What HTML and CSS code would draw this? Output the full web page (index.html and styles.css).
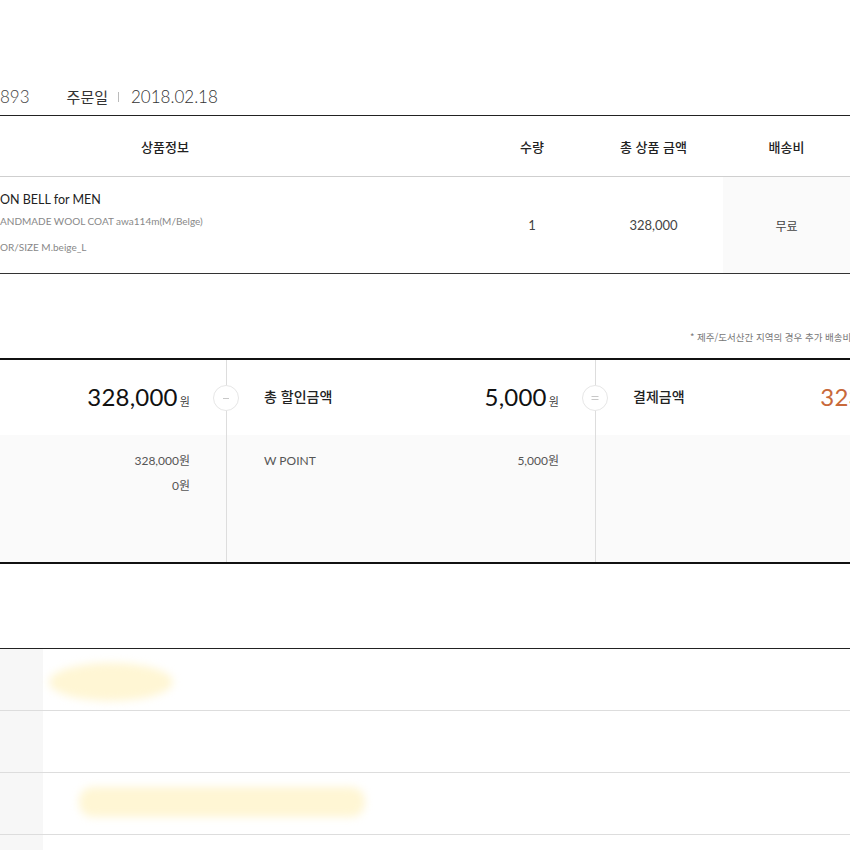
FILE: index.html
```html
<!DOCTYPE html>
<html lang="ko">
<head>
<meta charset="utf-8">
<link rel="stylesheet" href="styles.css">
</head>
<body>
<div class="page">
  <div class="order-head">
    <span class="order-no">893</span>
    <span class="order-label">주문일</span>
    <span class="sep"></span>
    <span class="order-date">2018.02.18</span>
  </div>

  <div class="items">
    <div class="row head-row">
      <div class="cell info-h">상품정보</div>
      <div class="cell">수량</div>
      <div class="cell">총 상품 금액</div>
      <div class="cell">배송비</div>
    </div>
    <div class="row item-row">
      <div class="cell info">
        <div class="brand">ON BELL for MEN</div>
        <div class="pname">ANDMADE WOOL COAT awa114m(M/Belge)</div>
        <div class="opt">OR/SIZE M.beige_L</div>
      </div>
      <div class="cell num">1</div>
      <div class="cell num">328,000</div>
      <div class="cell ship">무료</div>
    </div>
  </div>

  <p class="note">* 제주/도서산간 지역의 경우 추가 배송비가 발생할 수 있습니다.</p>

  <div class="summary">
    <div class="col">
      <div class="top"><span class="label"></span><span class="amount">328,000<small>원</small></span></div>
      <div class="detail">
        <div class="line"><span></span><span>328,000원</span></div>
        <div class="line"><span></span><span>0원</span></div>
      </div>
    </div>
    <div class="col">
      <span class="op">
        <svg width="26" height="26" viewBox="0 0 26 26"><circle cx="13" cy="13" r="12.5" fill="#fff" stroke="#e6e6e6"/><path d="M10 13.5h6" stroke="#c8c8c8" stroke-width="1"/></svg>
      </span>
      <div class="top"><span class="label">총 할인금액</span><span class="amount">5,000<small>원</small></span></div>
      <div class="detail">
        <div class="line"><span>W POINT</span><span>5,000원</span></div>
      </div>
    </div>
    <div class="col">
      <span class="op">
        <svg width="26" height="26" viewBox="0 0 26 26"><circle cx="13" cy="13" r="12.5" fill="#fff" stroke="#e6e6e6"/><path d="M9.5 11.5h7M9.5 14.5h7" stroke="#c8c8c8" stroke-width="1"/></svg>
      </span>
      <div class="top"><span class="label">결제금액</span><span class="amount pay">323,000<small>원</small></span></div>
      <div class="detail"></div>
    </div>
  </div>

  <div class="info-table">
    <div class="irow"><div class="ith"></div><div class="itd"><span class="blob blob1"></span></div></div>
    <div class="irow"><div class="ith"></div><div class="itd"></div></div>
    <div class="irow"><div class="ith"></div><div class="itd"><span class="blob blob2"></span></div></div>
    <div class="irow"><div class="ith"></div><div class="itd"></div></div>
  </div>
</div>
</body>
</html>
```

FILE: styles.css
```css
html, body {
  margin: 0;
  padding: 0;
  overflow: hidden;
  background: #fff;
}
body {
  width: 850px;
  height: 850px;
  font-family: Lato, "Noto Sans CJK KR", sans-serif;
  color: #222;
}
.page {
  width: 850px;
}

/* order head */
.order-head {
  box-sizing: border-box;
  height: 116px;
  padding-top: 84px;
  display: flex;
  align-items: flex-start;
  border-bottom: 1px solid #222;
  line-height: 26px;
}
.order-head > span { display: block; height: 26px; }
.order-no {
  font-size: 17px;
  font-weight: 300;
  color: #444;
}
.order-label {
  margin-left: 37px;
  font-size: 15px;
  color: #333;
  font-family: "Noto Sans CJK KR", sans-serif;
}
.order-head .sep {
  width: 1px;
  height: 10px;
  background: #bbb;
  margin: 8px 12px 0 10px;
}
.order-date {
  font-size: 17px;
  font-weight: 300;
  color: #333;
}

/* item table */
.row {
  display: grid;
  grid-template-columns: 480px 104px 139px 127px;
}
.head-row {
  height: 60px;
  border-bottom: 1px solid #cfcfcf;
}
.head-row .cell {
  display: flex;
  align-items: center;
  justify-content: center;
  font-family: "Noto Sans CJK KR", sans-serif;
  font-size: 13px;
  font-weight: 500;
  color: #222;
}
.head-row .info-h { padding-right: 150px; }
.item-row {
  height: 96px;
  border-bottom: 1px solid #333;
}
.info {
  display: flex;
  flex-direction: column;
  justify-content: flex-start;
  padding-top: 15px;
}
.brand {
  font-size: 12.5px;
  color: #222;
  line-height: 16px;
}
.pname {
  margin-top: 6px;
  font-size: 10px;
  color: #888;
  line-height: 14px;
}
.opt {
  margin-top: 12px;
  font-size: 10px;
  color: #888;
  line-height: 14px;
}
.num, .ship {
  display: flex;
  align-items: center;
  justify-content: center;
  font-size: 13px;
  color: #444;
}
.ship {
  background: #fafafa;
  font-family: "Noto Sans CJK KR", sans-serif;
  font-size: 12px;
}

.note {
  margin: 56px 0 0 690px;
  font-family: "Noto Sans CJK KR", sans-serif;
  font-size: 9.5px;
  color: #777;
  white-space: nowrap;
  line-height: 14px;
  height: 14px;
}

/* summary */
.summary {
  margin-top: 14px;
  width: 959px;
  display: grid;
  grid-template-columns: 226px 369px 364px;
  border-top: 2px solid #111;
  border-bottom: 2px solid #111;
}
.col {
  position: relative;
  display: flex;
  flex-direction: column;
}
.col + .col { border-left: 1px solid #ddd; }
.op {
  position: absolute;
  left: -14px;
  top: 25px;
  width: 26px;
  height: 26px;
}
.op svg { display: block; }
.top {
  box-sizing: border-box;
  height: 75px;
  display: flex;
  align-items: center;
  justify-content: space-between;
  padding: 0 36px 3px 37px;
  background: #fff;
}
.col:first-child .top { padding-left: 0; }
.label {
  font-family: "Noto Sans CJK KR", sans-serif;
  font-size: 14px;
  font-weight: 500;
  color: #222;
}
.amount {
  font-size: 24px;
  color: #111;
  letter-spacing: 0.2px;
}
.amount small {
  font-family: "Noto Sans CJK KR", sans-serif;
  font-size: 11px;
  margin-left: 2px;
  color: #444;
}
.amount.pay { color: #c8693a; }
.amount.pay small { color: #c8693a; }
.detail {
  height: 127px;
  background: #fafafa;
  padding: 13px 36px 0 37px;
  box-sizing: border-box;
}
.col:first-child .detail { padding-left: 0; }
.line {
  display: flex;
  justify-content: space-between;
  font-size: 12px;
  color: #555;
  line-height: 25px;
}

/* info table */
.info-table {
  margin-top: 84px;
  border-top: 1px solid #222;
}
.irow {
  display: flex;
  height: 61px;
  border-bottom: 1px solid #ddd;
}
.ith {
  width: 43px;
  background: #f7f7f7;
}
.itd {
  flex: 1;
  position: relative;
}
.blob {
  position: absolute;
  background: #fff6d4;
  filter: blur(4px);
}
.blob1 {
  left: 6px;
  top: 14px;
  width: 124px;
  height: 38px;
  border-radius: 50%;
}
.blob2 {
  left: 36px;
  top: 14px;
  width: 286px;
  height: 30px;
  border-radius: 14px;
}
```
